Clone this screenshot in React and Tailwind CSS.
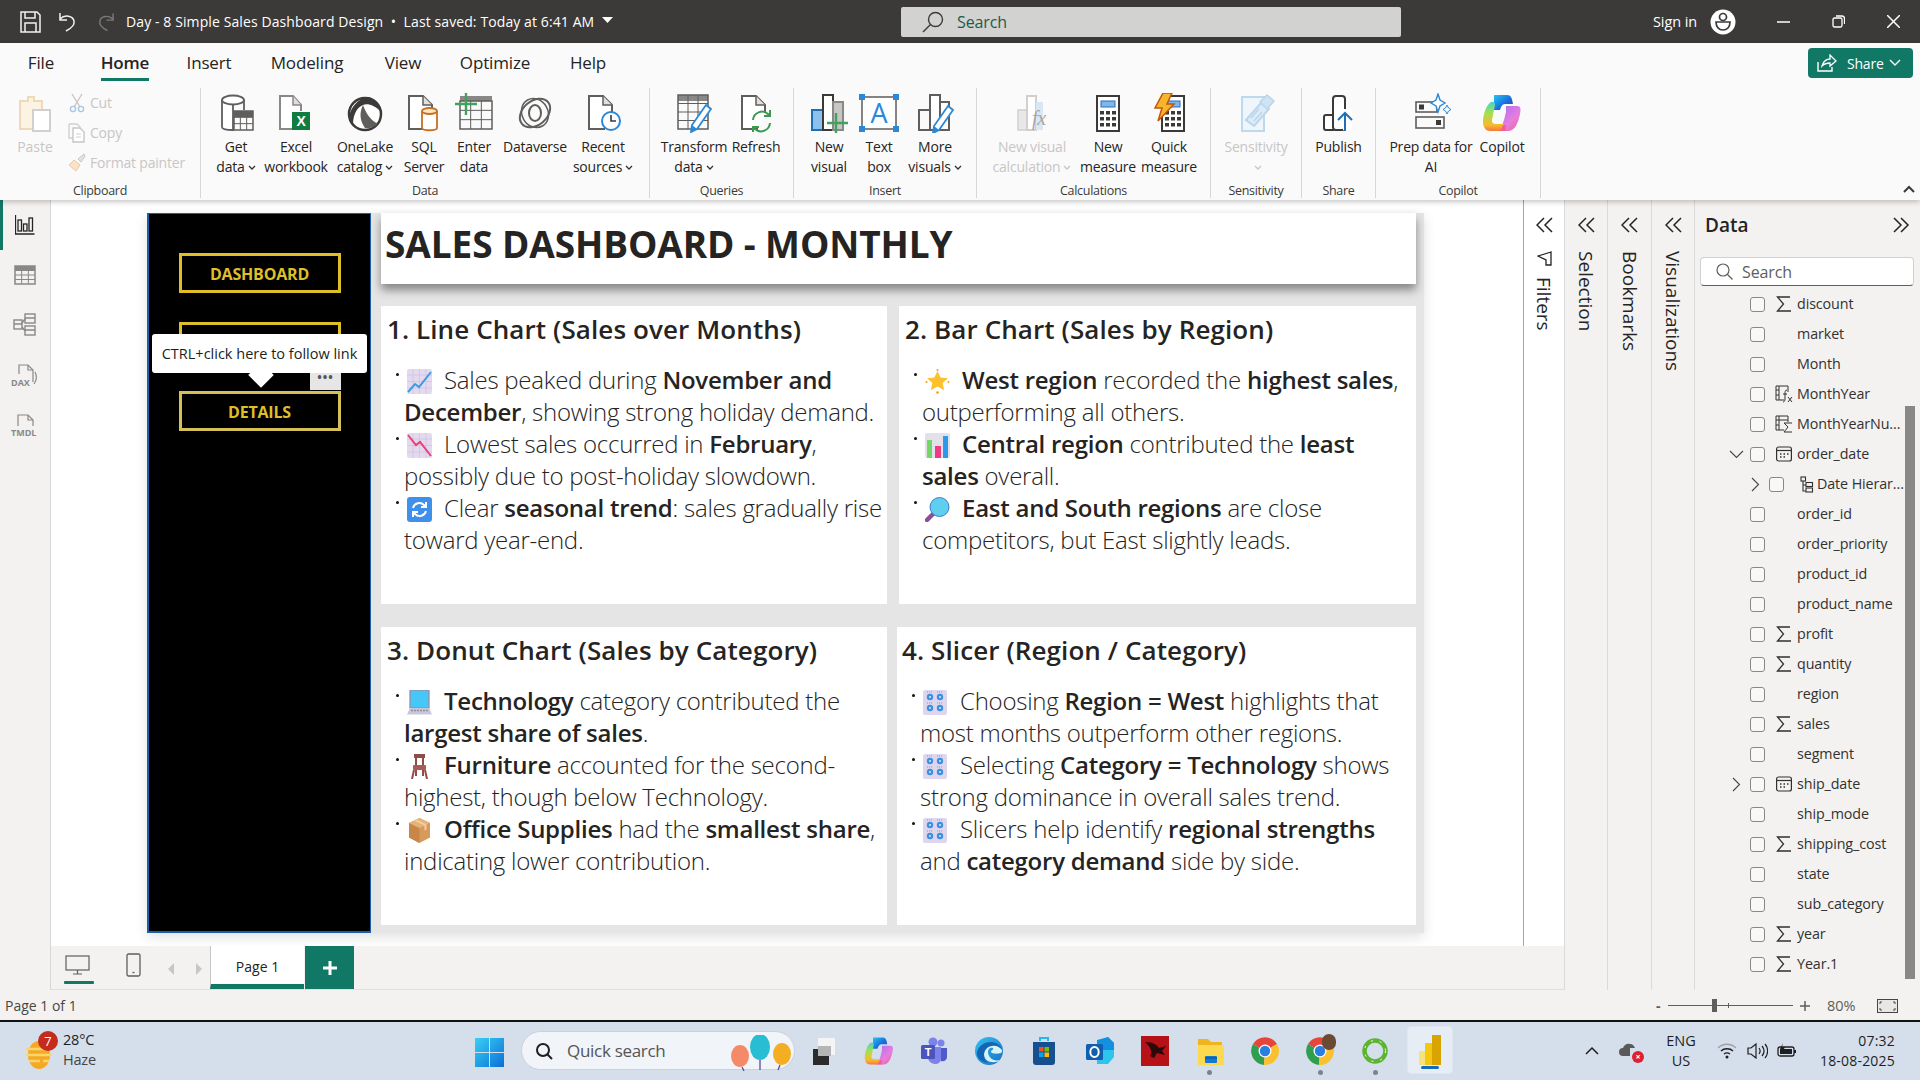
import React from "react";

const G = "#605e5c";
const Svg = ({ w = 40, h = 40, vb, children, className = "" }) => (
  <svg width={w} height={h} viewBox={vb || `0 0 ${w} ${h}`} fill="none" className={`shrink-0 ${className}`}>{children}</svg>
);
const Grid = ({ x, y, w, h, cols, rows, s = "#605e5c" }) => {
  const o = [];
  for (let i = 1; i < cols; i++) o.push(<path key={"c" + i} d={`M${x + (w * i) / cols} ${y}v${h}`} stroke={s} strokeWidth="1" />);
  for (let i = 1; i < rows; i++) o.push(<path key={"r" + i} d={`M${x} ${y + (h * i) / rows}h${w}`} stroke={s} strokeWidth="1" />);
  return <g>{o}<rect x={x} y={y} width={w} height={h} fill="none" stroke={s} strokeWidth="1.5" /></g>;
};
const Doc = ({ s = "#605e5c", x = 7 }) => (
  <g stroke={s} strokeWidth="2"><path d={`M${x + 16} 36H${x}V3h14l9 9v8`} fill="#fff" /><path d={`M${x + 14} 3v9h9`} fill="#e1dfdd" strokeWidth="1.5" /></g>
);

const IPaste = () => <Svg w={36} h={40}><path d="M3 8h8V4h6v4h8v28H3z" fill="#fdf3e3" stroke="#eed9b8" strokeWidth="2" /><rect x="16" y="17" width="17" height="21" fill="#fff" stroke="#d2d0ce" strokeWidth="2" /></Svg>;
const IGet = () => <Svg><path d="M6 7v27c0 2 5 3 11 3V7" fill="#fff" stroke={G} strokeWidth="1.8" /><path d="M28 7v10" stroke={G} strokeWidth="1.8" /><ellipse cx="17" cy="7" rx="11" ry="4.5" fill="#fff" stroke={G} strokeWidth="1.8" /><rect x="18" y="18" width="19" height="6" fill={G} /><Grid x={18} y={18} w={19} h={19} cols={3} rows={3} /></Svg>;
const IExcel = () => <Svg><path d="M25 18V12l-8-9H4v33h12" fill="#fff" stroke="#8a8886" strokeWidth="2" /><path d="M17 3v9h8" stroke="#8a8886" strokeWidth="1.5" fill="#e1dfdd" /><rect x="16" y="19" width="18" height="18" fill="#107c41" /><text x="25" y="33" fontSize="14" fontWeight="700" fill="#fff" textAnchor="middle" fontFamily="Liberation Sans">X</text></Svg>;
const IOne = () => <Svg><circle cx="20" cy="21" r="16" fill="#fff" stroke="#3b3a39" strokeWidth="2.5" /><path d="M5 20C9 8 20 3 24 4c8 3 12 11 12 15-6-7-14-9-18-7-5 2-10 8-10 20-3-4-3-8-3-12z" fill="#3b3a39" /><path d="M18 12c3 8 7 15 15 19-4 3-9 5-13 4-5-7-6-15-2-23z" fill="#605e5c" /><path d="M20 14c4 6 8 11 13 14" stroke="#fff" strokeWidth="1.500" /></Svg>;
const ISql = () => <Svg><Doc x={5} /><path d="M18 18v17c0 3 15 3 15 0V18" fill="#fff" stroke="#ca6f1e" strokeWidth="1.8" /><ellipse cx="25.5" cy="18" rx="7.5" ry="3" fill="#fde7c9" stroke="#ca6f1e" strokeWidth="1.8" /></Svg>;
const IEnter = () => <Svg><rect x="6" y="3" width="32" height="5" fill="#8a8886" /><Grid x={6} y={8} w={32} h={28} cols={3} rows={3} /><path d="M12 0v22M1 11h22" stroke="#3fa35b" strokeWidth="2.4" /></Svg>;
const IVerse = () => <Svg><ellipse cx="20" cy="20" rx="17" ry="12" transform="rotate(-40 20 20)" stroke={G} strokeWidth="2" /><ellipse cx="20" cy="20" rx="13" ry="15" transform="rotate(-30 20 20)" stroke={G} strokeWidth="1.5" /><ellipse cx="20" cy="20" rx="6" ry="8" stroke={G} strokeWidth="2" /></Svg>;
const IRecent = () => <Svg><Doc x={6} /><circle cx="28" cy="28" r="9" fill="#fff" stroke="#2b88d8" strokeWidth="2" /><path d="M28 22v6h5" stroke="#3b3a39" strokeWidth="1.6" /></Svg>;
const Pencil = ({ x = 0, y = 0 }) => <g transform={`translate(${x} ${y})`}><path d="M16 2l5 4L7 26l-6 3 1-7z" fill="#fff" stroke="#2b88d8" strokeWidth="1.8" /><path d="M1 29l1-7 5 4z" fill="#2b88d8" /></g>;
const ITrans = () => <Svg><rect x="4" y="2" width="30" height="6" fill="#8a8886" /><Grid x={4} y={2} w={30} h={34} cols={3} rows={4} /><Pencil x={16} y={10} /></Svg>;
const IRefresh = () => <Svg><Doc x={6} /><path d="M17 27a9 9 0 0 1 15-6l2 2m0-6v6h-6M34 30a9 9 0 0 1-15 6l-2-2m0 5v-5h6" stroke="#3a9a4f" strokeWidth="2" fill="none" /></Svg>;
const INewV = () => <Svg><rect x="3" y="17" width="11" height="20" fill="#8cc1ee" stroke="#1f6fb5" strokeWidth="2" /><rect x="14" y="2" width="10" height="35" fill="#fff" stroke="#3b3a39" strokeWidth="2" /><rect x="24" y="9" width="10" height="28" fill="#c8c6c4" stroke="#8a8886" strokeWidth="2" /><path d="M27 20v20M18 30h21" stroke="#3fa35b" strokeWidth="2.4" /></Svg>;
const IText = () => <Svg><rect x="3" y="4" width="34" height="32" stroke="#605e5c" strokeWidth="1.5" fill="#fff" /><text x="20" y="30" fontSize="27" fill="#2b88d8" textAnchor="middle" fontFamily="Open Sans">A</text>{[[0, 1], [34, 1], [0, 33], [34, 33]].map(([x, y]) => <rect key={x + "-" + y} x={x} y={y} width="6" height="6" fill="#2b88d8" />)}</Svg>;
const IMore = () => <Svg><rect x="4" y="17" width="11" height="20" stroke={G} strokeWidth="2" /><rect x="15" y="2" width="10" height="35" fill="#fff" stroke={G} strokeWidth="2" /><rect x="25" y="9" width="9" height="28" stroke={G} strokeWidth="2" fill="#fff" /><Pencil x={17} y={11} /></Svg>;
const ICalc = () => <Svg><rect x="6" y="17" width="9" height="20" fill="#e8e8e8" stroke="#d2d0ce" strokeWidth="1.5" /><rect x="15" y="3" width="9" height="34" fill="#fff" stroke="#d2d0ce" strokeWidth="2" /><rect x="24" y="9" width="7" height="28" fill="#d9e6f4" /><text x="20" y="32" fontSize="20" fontStyle="italic" fill="#a8a6a4" fontFamily="Liberation Serif">fx</text></Svg>;
const Calc = ({ x = 9 }) => <g><rect x={x} y="3" width="22" height="35" fill="#fff" stroke="#3b3a39" strokeWidth="2" /><rect x={x + 4} y="8" width="14" height="6" fill="#7db7ec" stroke="#2b6fb5" />{[18, 24, 30].map((y) => [4, 10, 16].map((d) => <rect key={y + "-" + d} x={x + d - 1} y={y} width="4" height="3.5" fill="#3b3a39" />))}</g>;
const IMeasure = () => <Svg><Calc /></Svg>;
const IQuick = () => <Svg><Calc x={13} /><path d="M14 0h9l-5 11h7L9 28l4-13H6z" fill="#f7b52c" stroke="#c4560c" strokeWidth="1.5" /></Svg>;
const ISens = () => <Svg><path d="M6 4h22v34H6z" fill="#eef6fc" stroke="#bcd9ee" strokeWidth="2" /><path d="M10 27l15-17 8 6-15 17z" fill="#dcebf7" stroke="#b9d6ec" strokeWidth="2" /><path d="M24 9l7-7 7 6-7 8z" fill="#cfe3f3" stroke="#b9d6ec" strokeWidth="1.5" /><path d="M15 25l8-9M18 28l8-9" stroke="#b9d6ec" strokeWidth="1.5" /></Svg>;
const IPub = () => <Svg><rect x="5" y="22" width="11" height="15" rx="2" stroke="#3b3a39" strokeWidth="2" fill="#fff" /><rect x="14" y="3" width="12" height="34" rx="3" stroke="#3b3a39" strokeWidth="2" fill="#fff" /><rect x="24" y="16" width="9" height="21" fill="#fff" /><path d="M26 38V21M19 27l7-7 7 7" stroke="#1f6fb5" strokeWidth="2" fill="none" /></Svg>;
const IPrep = () => <Svg><rect x="5" y="9" width="21" height="10" stroke="#605e5c" strokeWidth="1.6" /><rect x="8" y="11.5" width="5" height="5" fill="#3b3a39" /><rect x="5" y="24" width="28" height="11" stroke="#605e5c" strokeWidth="1.6" /><rect x="25" y="27" width="5" height="5" fill="#3b3a39" /><path d="M27 1l2 6 5 3-5 3-2 6-2-6-5-3 5-3z" fill="#fff" stroke="#2b88d8" strokeWidth="1.4" /><path d="M36 12l1.500 3 2.500 1.500-2.500 1.500-1.500 3-1.500-3L32 16.500l2.500-1.500z" stroke="#2b88d8" fill="#fff" /></Svg>;
const ICop = ({ s = 40 }) => (
  <Svg w={s} h={s} vb="0 0 40 40">
    <defs>
      <linearGradient id="cp1" x1="0" y1="0" x2="1" y2="1"><stop offset="0" stopColor="#22c7ee" /><stop offset=".55" stopColor="#1a6ee0" /><stop offset="1" stopColor="#2d3fb0" /></linearGradient>
      <linearGradient id="cp2" x1="0" y1="0" x2="0" y2="1"><stop offset="0" stopColor="#45d6c6" /><stop offset=".4" stopColor="#a6e04f" /><stop offset=".8" stopColor="#f9b92c" /><stop offset="1" stopColor="#f5793c" /></linearGradient>
      <linearGradient id="cp3" x1="0" y1="0" x2="1" y2="1"><stop offset="0" stopColor="#a06ef0" /><stop offset=".6" stopColor="#e67de0" /><stop offset="1" stopColor="#f0608f" /></linearGradient>
    </defs>
    <path d="M12 2h13c4 0 5 3 6 9l-8 0c-3 0-4 3-5 6l-6 0z" fill="url(#cp1)" />
    <path d="M24 13h11c4 0 4 3 3 8-2 9-5 17-12 17H14c5-2 6-5 8-11l2-8z" fill="url(#cp3)" />
    <path d="M9 9c-5 3-8 13-8 20 0 4 2 9 7 9h9c3-1 4-3 5-7h-8c-3 0-4-1-4-4l3-15c.5-2-2-4-4-3z" fill="url(#cp2)" />
    <path d="M17 38h8c-1 0-2-2-1-6l-3 0c-1 3-2 5-4 6z" fill="#f0608f" />
  </Svg>
);

const Chev = ({ c = "#323130" }) => <svg width="8" height="6" viewBox="0 0 8 6" className="inline-block ml-[3px] align-[1px]"><path d="M1 1l3 3 3-3" stroke={c} strokeWidth="1.3" fill="none" /></svg>;

const RB = ({ w, icon, l1, l2, chev, off }) => (
  <div className={`flex flex-col items-center pt-[5px] text-[14px] leading-[20px] tracking-[-0.2px] whitespace-nowrap ${off ? "text-[#c8c6c4]" : "text-[#252423]"}`} style={{ width: w }}>
    <div className="h-[40px] flex items-center justify-center mb-[4px]">{icon}</div>
    <div>{l1}</div>
    <div className="h-[20px]">{l2}{chev && <Chev c={off ? "#c8c6c4" : "#323130"} />}</div>
  </div>
);
const Group = ({ w, label, children }) => (
  <div className="flex flex-col h-[110px] border-r border-[#d9d7d5] shrink-0" style={{ width: w }}>
    <div className="flex h-[96px]">{children}</div>
    <div className="text-center text-[12.500px] leading-[14px] tracking-[-0.3px] text-[#3b3a39]">{label}</div>
  </div>
);

const Ribbon = () => (
  <div className="relative z-10 h-[157px] bg-[#fafafa] shadow-[0_2px_5px_rgba(0,0,0,0.22)] shrink-0">
    <div className="flex h-[42px] items-start">
      {[["File", 82], ["Home", 86], ["Insert", 82], ["Modeling", 114], ["View", 78], ["Optimize", 106], ["Help", 80]].map(([t, w]) => (
        <div key={t} className="flex justify-center pt-[7px] text-[17px] tracking-[-0.15px] text-[#252423]" style={{ width: w }}>
          <span className={t === "Home" ? "h-[31px] border-b-[3px] border-[#117865] font-semibold" : "h-[31px]"}>{t}</span>
        </div>
      ))}
      <div className="ml-auto mr-[7px] mt-[5px] w-[105px] h-[30px] rounded-[4px] bg-[#117865] text-white flex items-center pl-[9px] gap-[10px] text-[14px] tracking-[-0.2px]">
        <svg width="20" height="18" viewBox="0 0 20 18" fill="none"><path d="M1 8v9h14v-4" stroke="#fff" strokeWidth="1.4" /><path d="M5 12c1-5 5-7 8-7V1l6 6-6 5V9c-3 0-6 1-8 3z" stroke="#fff" strokeWidth="1.3" /></svg>
        <span className="flex items-center gap-[5px]">Share<svg width="12" height="8" viewBox="0 0 12 8"><path d="M1 1l5 5 5-5" stroke="#fff" strokeWidth="1.4" fill="none" /></svg></span>
      </div>
    </div>
    <div className="flex h-[115px] pt-[3px]">
      <Group w={201} label="Clipboard">
        <div className="flex flex-col items-center w-[70px] pt-[5px] text-[14px] leading-[20px] text-[#c8c6c4]"><IPaste /><span className="mt-[4px]">Paste</span></div>
        <div className="flex flex-col -ml-[2px] pt-[3px] text-[14px] leading-[24px] gap-[6px] text-[#c8c6c4] tracking-[-0.2px] whitespace-nowrap">
          <div className="flex items-center gap-[4px] h-[24px]">
            <svg width="18" height="20" viewBox="0 0 18 20" fill="none"><path d="M4 1l8 13M14 1L6 14" stroke="#c8c6c4" strokeWidth="1.4" /><circle cx="5" cy="16" r="2.600" stroke="#a9c7e3" strokeWidth="1.400" /><circle cx="13" cy="16" r="2.600" stroke="#a9c7e3" strokeWidth="1.400" /></svg>Cut
          </div>
          <div className="flex items-center gap-[4px] h-[24px]">
            <svg width="18" height="20" viewBox="0 0 18 20" fill="none"><path d="M1 1h8l3 3v2M5 15H1V1" stroke="#d2d0ce" strokeWidth="1.400" /><path d="M5 5h7l4 4v10H5z" stroke="#c8c6c4" strokeWidth="1.400" fill="#fff" /><path d="M8 11h5M8 14h5" stroke="#d2d0ce" /></svg>Copy
          </div>
          <div className="flex items-center gap-[4px] h-[24px]">
            <svg width="18" height="20" viewBox="0 0 18 20" fill="none"><path d="M10 6L16 1l1 2-4 6z" fill="#e6e4e2" stroke="#c8c6c4" /><path d="M6 7l6 5-4 6-7-6z" fill="#fbe3c8" stroke="#eec9a0" /></svg>Format painter
          </div>
        </div>
      </Group>
      <Group w={449} label="Data">
        <div className="w-[5px]" />
        <RB w={60} icon={<IGet />} l1="Get" l2="data" chev />
        <RB w={60} icon={<IExcel />} l1="Excel" l2="workbook" />
        <RB w={78} icon={<IOne />} l1="OneLake" l2="catalog" chev />
        <RB w={40} icon={<ISql />} l1="SQL" l2="Server" />
        <RB w={60} icon={<IEnter />} l1="Enter" l2="data" />
        <RB w={62} icon={<IVerse />} l1="Dataverse" />
        <RB w={74} icon={<IRecent />} l1="Recent" l2="sources" chev />
      </Group>
      <Group w={144} label="Queries">
        <RB w={88} icon={<ITrans />} l1="Transform" l2="data" chev />
        <RB w={36} icon={<IRefresh />} l1="Refresh" />
      </Group>
      <Group w={183} label="Insert">
        <RB w={70} icon={<INewV />} l1="New" l2="visual" />
        <RB w={30} icon={<IText />} l1="Text" l2="box" />
        <RB w={82} icon={<IMore />} l1="More" l2="visuals" chev />
      </Group>
      <Group w={234} label="Calculations">
        <RB w={110} off icon={<ICalc />} l1="New visual" l2="calculation" chev />
        <RB w={42} icon={<IMeasure />} l1="New" l2="measure" />
        <RB w={80} icon={<IQuick />} l1="Quick" l2="measure" />
      </Group>
      <Group w={91} label="Sensitivity"><RB w={90} off icon={<ISens />} l1="Sensitivity" l2="" chev /></Group>
      <Group w={74} label="Share"><RB w={73} icon={<IPub />} l1="Publish" /></Group>
      <Group w={165} label="Copilot">
        <RB w={110} icon={<IPrep />} l1="Prep data for" l2="AI" />
        <RB w={32} icon={<ICop />} l1="Copilot" />
      </Group>
      <div className="ml-auto mr-[4px] mt-[96px]"><svg width="14" height="10" viewBox="0 0 14 10"><path d="M2 8l5-5 5 5" stroke="#3b3a39" strokeWidth="2" fill="none" /></svg></div>
    </div>
  </div>
);

const TitleBar = () => (
  <div className="flex h-[43px] bg-[#3b3a38] text-white shrink-0 items-center">
    <div className="w-[901px] flex items-center shrink-0">
      <div className="w-[20px]" />
      <svg width="21" height="22" viewBox="0 0 21 22" fill="none" stroke="#f3f2f1" strokeWidth="1.5"><path d="M1 1h16l3 3v17H1z" /><path d="M5 1v6h10V1M5 21v-9h11v9M8 15" /></svg>
      <svg className="ml-[18px]" width="18" height="22" viewBox="0 0 18 22" fill="none" stroke="#f3f2f1" strokeWidth="1.5"><path d="M1 2v7h7M1 8c5-5 13-3 14 2 1 5-4 8-8 10" /></svg>
      <svg className="ml-[20px]" width="17" height="22" viewBox="0 0 18 22" fill="none" stroke="#7b7a78" strokeWidth="1.5"><path d="M17 2v7h-7M17 8c-5-5-13-3-14 2-1 5 4 8 8 10" /></svg>
      <div className="ml-[12px] text-[14px] whitespace-nowrap tracking-[0.1px]">Day - 8 Simple Sales Dashboard Design&nbsp;&nbsp;•&nbsp; Last saved: Today at 6:41 AM</div>
      <svg className="ml-[8px] mb-[4px]" width="11" height="6" viewBox="0 0 11 6"><path d="M0 0h11L5.500 6z" fill="#fff" /></svg>
    </div>
    <div className="w-[500px] h-[30px] rounded-[2px] bg-[#d2d2d0] flex items-center pl-[21px] gap-[13px] shrink-0">
      <svg width="22" height="22" viewBox="0 0 22 22" fill="none" stroke="#3b3a39" strokeWidth="1.4"><circle cx="13.500" cy="8.500" r="7" /><path d="M8.500 13.500L1 21" /></svg>
      <span className="text-[16px] text-[#1c5a4e] tracking-[-0.1px]">Search</span>
    </div>
    <div className="flex items-center flex-1">
      <span className="ml-[252px] text-[14.500px] whitespace-nowrap tracking-[-0.1px]">Sign in</span>
      <svg className="ml-[13px]" width="26" height="26" viewBox="0 0 26 26" fill="none"><circle cx="13" cy="13" r="12.500" fill="#fff" /><circle cx="13" cy="8" r="3.500" stroke="#3b3a38" strokeWidth="1.700" /><path d="M6 13h14c0 5-3 8-7 8s-7-3-7-8z" stroke="#3b3a38" strokeWidth="1.700" /></svg>
      <svg className="ml-[41px]" width="13" height="2" viewBox="0 0 13 2"><path d="M0 1h13" stroke="#fff" strokeWidth="1.500" /></svg>
      <svg className="ml-[42px]" width="13" height="13" viewBox="0 0 13 13" fill="none" stroke="#fff" strokeWidth="1.300"><rect x="1" y="3" width="9" height="9" rx="1.500" /><path d="M4 1h6c2 0 2.500 1 2.500 2.500V9" /></svg>
      <svg className="ml-[42px]" width="13" height="13" viewBox="0 0 13 13" stroke="#fff" strokeWidth="1.500"><path d="M0 0l13 13M13 0L0 13" /></svg>
    </div>
  </div>
);

const RailSlot = ({ children }) => <div className="relative h-[50px] w-full flex items-center justify-center shrink-0">{children}</div>;
const Rail = () => (
  <div className="relative w-[51px] shrink-0 bg-[#f3f2f1] border-r border-[#d9d7d5] flex flex-col items-center">
    <div className="absolute left-0 top-0 w-[3px] h-[50px] bg-[#117865]" />
    <RailSlot><svg width="20" height="20" viewBox="0 0 20 20" fill="none" stroke="#252423" strokeWidth="1.300"><path d="M.5 0v19h19" /><rect x="3" y="5" width="3.500" height="11" /><rect x="8.500" y="9" width="3.500" height="7" /><rect x="14" y="3" width="3.500" height="13" /></svg></RailSlot>
    <RailSlot><svg width="22" height="20" viewBox="0 0 22 20"><rect x="1" y="1" width="20" height="4" fill="#8a8886" /><Grid x={1} y={1} w={20} h={18} cols={3} rows={4} s="#8a8886" /></svg></RailSlot>
    <RailSlot><svg width="24" height="24" viewBox="0 0 24 24" fill="none" stroke="#8a8886" strokeWidth="1.400"><rect x="1" y="7" width="8" height="9" /><rect x="12" y="1" width="10" height="9" /><rect x="12" y="13" width="10" height="9" /><path d="M1 11h8M12 5h10M12 17h10M9 10l3-4M9 14l3 4" /></svg></RailSlot>
    <RailSlot>
      <div className="relative h-[24px] w-[28px] mt-[2px]">
        <svg width="28" height="24" viewBox="0 0 28 24" fill="none" stroke="#8a8886" strokeWidth="1.200"><path d="M8 10V1h9l5 5v12" /><path d="M17 1v5h5M24 8c2 4 2 8-1 12" /></svg>
        <span className="absolute left-0 bottom-0 text-[9px] leading-[10px] font-bold text-[#8a8886]">DAX</span>
      </div>
    </RailSlot>
    <RailSlot>
      <div className="relative h-[24px] w-[28px] mt-[2px]">
        <svg width="28" height="24" viewBox="0 0 28 24" fill="none" stroke="#8a8886" strokeWidth="1.200"><path d="M7 12V1h10l5 5v6" /><path d="M17 1v5h5" /></svg>
        <span className="absolute left-0 bottom-0 text-[9px] leading-[10px] font-bold text-[#8a8886]">TMDL</span>
      </div>
    </RailSlot>
  </div>
);

/* ---- emoji drawings ---- */
const Em = ({ children }) => (
  <svg width="25" height="25" viewBox="0 0 25 25" className="inline-block mr-[12px] align-[-5px]">{children}</svg>
);
const GridBg = () => <g><rect width="25" height="25" rx="2" fill="#e4daf0" /><path d="M6 0v25M12.500 0v25M19 0v25M0 6h25M0 12.500h25M0 19h25" stroke="#cfc3de" strokeWidth=".8" /></g>;
const EUp = () => <Em><GridBg /><path d="M1 23l7-8 4 3L24 3" stroke="#3c9be0" strokeWidth="2" fill="none" /></Em>;
const EDown = () => <Em><GridBg /><path d="M1 2l8 10 4-3 11 14" stroke="#ea3e78" strokeWidth="2" fill="none" /></Em>;
const ELoop = () => <Em><rect width="25" height="25" rx="3" fill="#3f90ea" /><path d="M6 11a6.500 6.500 0 0 1 11-3l2 2m0-5v5h-5M19 14a6.500 6.500 0 0 1-11 3l-2-2m0 5v-5h5" stroke="#fff" strokeWidth="2" fill="none" /></Em>;
const EStar = () => <Em><path d="M12.500 2l3.200 6.500 7.300.8-5.400 4.800 1.600 7.200-6.700-3.700-6.700 3.700 1.600-7.200L2 9.300l7.300-.8z" fill="#fdc12e" /><circle cx="12.500" cy="1" r="1" fill="#f79a1c" /><circle cx="1.500" cy="13" r="1" fill="#f79a1c" /><circle cx="23.500" cy="13" r="1" fill="#f79a1c" /><circle cx="12.500" cy="23.500" r="1.300" fill="#f79a1c" /></Em>;
const EBars = () => <Em><rect width="25" height="25" rx="2" fill="#e3e0ea" /><rect x="2" y="7" width="5" height="18" fill="#72d865" /><rect x="10" y="13" width="6" height="12" fill="#ee3c84" /><rect x="18" y="3" width="5" height="22" fill="#2c9ae8" /></Em>;
const EMag = () => <Em><path d="M9 16l-7 7" stroke="#8a4e9c" strokeWidth="4.500" strokeLinecap="round" /><circle cx="14.500" cy="10" r="9.500" fill="#5ecfee" stroke="#3f7ccd" strokeWidth="1" /></Em>;
const ELap = () => <Em><rect x="3" y="0" width="19" height="18" fill="#3da8f2" stroke="#9c9ab0" strokeWidth="1.400" /><rect x="4" y="1" width="17" height="16" fill="#45c8f7" /><path d="M3 18h19l3 6.500H0z" fill="#c9c6d8" /><path d="M4 20.500h17" stroke="#8f8da3" strokeWidth="1.500" strokeDasharray="2 1" /></Em>;
const EChair = () => <Em><rect x="7" y="0" width="11" height="4" fill="#8f4c48" /><rect x="8" y="4" width="2" height="8" fill="#8f4c48" /><rect x="15" y="4" width="2" height="8" fill="#8f4c48" /><rect x="6" y="11" width="13" height="5" rx="1" fill="#a85c55" /><path d="M7 16l-2 9M18 16l2 9M9 16v6M16 16v6" stroke="#8f4c48" strokeWidth="2" /></Em>;
const EBox = () => <Em><path d="M12.500 0l10.500 5v14.500L12.500 25 2 19.500V5z" fill="#d89a5b" /><path d="M12.500 25V10L2 5v14.500z" fill="#c98649" /><path d="M12.500 10L23 5 12.500 0 2 5z" fill="#e6b27a" /><path d="M7 2.500l10.500 5v5l2-1V6.500L9 1z" fill="#f1cfa3" /></Em>;
const EKnob = () => <Em><rect width="24" height="25" rx="2" fill="#ddd6ee" />{[[7, 7], [17, 7], [7, 18], [17, 18]].map(([x, y]) => <g key={x + "-" + y}><circle cx={x} cy={y} r="3.200" fill="#3d8fdf" /><circle cx={x} cy={y} r="1" fill="#d4ecfb" /><path d={`M${x - 3} ${y - 5}h6`} stroke="#9a97ad" strokeDasharray="1 1" /></g>)}</Em>;

const Dot = () => <span className="inline-block w-[3px] h-[3px] rounded-full bg-[#111] -ml-[8px] mr-[8px] align-[13px]" />;
const B = ({ children }) => <b className="font-semibold text-[#252423]">{children}</b>;
const Li = ({ em, children }) => (
  <div className="whitespace-nowrap"><Dot />{em}{children}</div>
);
const Card = ({ w, pl, title, children }) => (
  <div className="bg-white h-[298px] shrink-0 pt-[7px]" style={{ width: w, paddingLeft: pl }}>
    <div className="text-[26px] leading-[32px] font-semibold text-[#252423] tracking-[0.1px] whitespace-nowrap">{title}</div>
    <div className="mt-[19px] text-[24px] leading-[32px] font-light text-[#252423] tracking-[-0.25px]" style={{ marginLeft: 23 - pl }}>{children}</div>
  </div>
);

const NavBtn = ({ children, sel }) => (
  <div className={`w-[162px] h-[40px] shrink-0 flex items-center justify-center border-[3px] pt-[2px] text-[16px] font-bold tracking-[-0.2px] text-[#dfbf26] ${sel ? "border-[#d5c058]" : "border-[#dfbf26]"}`}>{children}</div>
);

const Report = () => (
  <div className="flex w-[1277px] h-[720px] shadow-[0_4px_12px_rgba(0,0,0,0.12)]">
    <div className="relative w-[224px] shrink-0 bg-black border border-[#1a5fa8] border-l-2 border-b-2 flex flex-col items-center pt-[39px] gap-[29px]">
      <NavBtn>DASHBOARD</NavBtn>
      <NavBtn />
      <NavBtn sel>DETAILS</NavBtn>
      <div className="absolute left-[161px] top-[159px] w-[31px] h-[17px] bg-[#e6e6e6] flex justify-center text-[#555] text-[12px] leading-[10px] font-bold tracking-[1px]">•••</div>
      <div className="absolute left-[103px] top-[152px] w-[18px] h-[18px] rotate-45 bg-white" />
      <div className="absolute left-[3px] top-[120px] w-[215px] h-[39px] rounded-[3px] bg-white flex items-center justify-center text-[14.500px] text-[#201f1e] whitespace-nowrap">CTRL+click here to follow link</div>
    </div>
    <div className="flex-1 bg-[#e5e5e5] pl-[10px]">
      <div className="w-[1035px] h-[71px] bg-white shadow-[0_6px_9px_rgba(0,0,0,0.42)] pl-[4px] pt-[6px] text-[37px] leading-[50px] font-bold text-[#252423] tracking-[-0.1px] whitespace-nowrap">SALES DASHBOARD - MONTHLY</div>
      <div className="flex mt-[22px] gap-[12px]">
        <Card w={506} pl={6} title="1. Line Chart (Sales over Months)">
          <Li em={<EUp />}>Sales peaked during <B>November and<br />December</B>, showing strong holiday demand.</Li>
          <Li em={<EDown />}>Lowest sales occurred in <B>February</B>,<br />possibly due to post-holiday slowdown.</Li>
          <Li em={<ELoop />}>Clear <B>seasonal trend</B>: sales gradually rise<br />toward year-end.</Li>
        </Card>
        <Card w={517} pl={6} title="2. Bar Chart (Sales by Region)">
          <Li em={<EStar />}><B>West region</B> recorded the <B>highest sales</B>,<br />outperforming all others.</Li>
          <Li em={<EBars />}><B>Central region</B> contributed the <B>least<br />sales</B> overall.</Li>
          <Li em={<EMag />}><B>East and South regions</B> are close<br />competitors, but East slightly leads.</Li>
        </Card>
      </div>
      <div className="flex mt-[23px] gap-[10px]">
        <Card w={506} pl={6} title="3. Donut Chart (Sales by Category)">
          <Li em={<ELap />}><B>Technology</B> category contributed the<br /><B>largest share of sales</B>.</Li>
          <Li em={<EChair />}><B>Furniture</B> accounted for the second-<br />highest, though below Technology.</Li>
          <Li em={<EBox />}><B>Office Supplies</B> had the <B>smallest share</B>,<br />indicating lower contribution.</Li>
        </Card>
        <Card w={519} pl={5} title="4. Slicer (Region / Category)">
          <Li em={<EKnob />}>Choosing <B>Region = West</B> highlights that<br />most months outperform other regions.</Li>
          <Li em={<EKnob />}>Selecting <B>Category = Technology</B> shows<br />strong dominance in overall sales trend.</Li>
          <Li em={<EKnob />}>Slicers help identify <B>regional strengths</B><br />and <B>category demand</B> side by side.</Li>
        </Card>
      </div>
    </div>
  </div>
);

const DblChev = ({ right }) => (
  <svg width="17" height="16" viewBox="0 0 17 16" fill="none" stroke="#252423" strokeWidth="1.500">
    {right ? <path d="M1 1l7 7-7 7M8 1l7 7-7 7" /> : <path d="M8 1L1 8l7 7M16 1L9 8l7 7" />}
  </svg>
);

const Pane = ({ w, label, filter }) => (
  <div className={`shrink-0 flex flex-col items-center pt-[17px] ${filter ? "" : "border-l border-[#dcdad8] bg-[#f3f2f1]"}`} style={{ width: w }}>
    <DblChev />
    {filter && <svg className="mt-[18px]" width="15" height="15" viewBox="0 0 15 15" fill="none" stroke="#252423" strokeWidth="1.300"><path d="M14 1L1 5l8 4v5h5z" /></svg>}
    <div className={`[writing-mode:vertical-rl] text-[19px] font-medium text-[#252423] whitespace-nowrap ${filter ? "mt-[11px]" : "mt-[18px]"}`}>{label}</div>
  </div>
);

const Sum = () => <svg width="16" height="16" viewBox="0 0 16 16" fill="none" stroke="#323130" strokeWidth="1.300"><path d="M14 1H1.500l6 7-6 7H15" /></svg>;
const Cal = () => <svg width="16" height="16" viewBox="0 0 16 16" fill="none" stroke="#323130" strokeWidth="1.200"><rect x=".6" y="1" width="14.800" height="14" rx="2" /><path d="M1 4.500h14" /><path d="M4 8h1.500M7.500 8H9M11 8h1.500M4 11h1.500M7.500 11H9" strokeWidth="1.300" /></svg>;
const Fx = () => <svg width="18" height="18" viewBox="0 0 18 18" fill="none" stroke="#323130" strokeWidth="1"><path d="M9 15H1V1h12v6M4 1v14M1 5h3M1 10h3" /><path d="M12 5c-2 0-2 2-2 4v5c0 2-1 3-2 3M8 9h4" /><path d="M13 12l4 5M17 12l-4 5" /></svg>;
const MeasI = () => <svg width="18" height="18" viewBox="0 0 18 18" fill="none" stroke="#323130" strokeWidth="1"><path d="M9 15H1V1h12v6M4 1v14M1 5h12M1 10h3" /><path d="M17 8H9l4 4-4 5h8" /></svg>;
const Hier = () => <svg width="14" height="17" viewBox="0 0 14 17" fill="none" stroke="#323130" strokeWidth="1.100"><rect x="1" y="1" width="4.500" height="4" /><path d="M3 5v10h3M3 9h3" /><rect x="6" y="6.500" width="6.500" height="4" /><rect x="6" y="12" width="6.500" height="4" /></svg>;

const rows = [
  ["discount", <Sum />], ["market"], ["Month"], ["MonthYear", <Fx />], ["MonthYearNu...", <MeasI />],
  ["order_date", <Cal />, "open"], ["Date Hierar...", <Hier />, "child"], ["order_id"], ["order_priority"], ["product_id"], ["product_name"],
  ["profit", <Sum />], ["quantity", <Sum />], ["region"], ["sales", <Sum />], ["segment"], ["ship_date", <Cal />, "closed"], ["ship_mode"],
  ["shipping_cost", <Sum />], ["state"], ["sub_category"], ["year", <Sum />], ["Year.1", <Sum />],
];

const Row = ({ t, icon, st }) => {
  const child = st === "child";
  return (
    <div className="h-[30px] flex items-center text-[14.300px] text-[#323130] tracking-[-0.1px] whitespace-nowrap">
      <div className={`flex justify-center shrink-0 ${child ? "w-[74px] pl-[46px]" : "w-[55px] pl-[27px]"}`}>
        {st === "open" && <svg width="15" height="9" viewBox="0 0 15 9" fill="none" stroke="#484644" strokeWidth="1.100"><path d="M1 1l6.500 6.500L14 1" /></svg>}
        {(st === "closed" || child) && <svg width="9" height="15" viewBox="0 0 9 15" fill="none" stroke="#484644" strokeWidth="1.100"><path d="M1 1l6.500 6.500L1 14" /></svg>}
      </div>
      <div className="w-[15px] h-[15px] shrink-0 rounded-[3px] border border-[#8a8886] bg-[#f8f8f7]" />
      <div className={`w-[18px] flex justify-center shrink-0 ${child ? "ml-[14px]" : "ml-[10px]"}`}>{icon}</div>
      <span className={child ? "ml-[1px]" : "ml-[4px]"}>{t}</span>
    </div>
  );
};

const DataPane = () => (
  <div className="w-[226px] shrink-0 border-l border-[#dcdad8] bg-[#f3f2f1] flex flex-col">
    <div className="flex items-center justify-between h-[50px] pl-[10px] pr-[10px]">
      <span className="text-[19px] font-semibold text-[#252423]">Data</span>
      <DblChev right />
    </div>
    <div className="ml-[5px] mr-[6px] mt-[7px] h-[29px] rounded-[4px] border border-[#d1d1d1] border-b-[#616161] bg-white flex items-center pl-[15px] gap-[9px] shrink-0">
      <svg width="17" height="17" viewBox="0 0 17 17" fill="none" stroke="#605e5c" strokeWidth="1.200"><circle cx="7" cy="7" r="6" /><path d="M11.500 11.500l5 5" /></svg>
      <span className="text-[16px] text-[#605e5c] tracking-[-0.1px] pt-[1px]">Search</span>
    </div>
    <div className="flex flex-1 mt-[10px] overflow-hidden">
      <div className="flex-1 -mt-[7px]">{rows.map((r) => <Row key={r[0]} t={r[0]} icon={r[1]} st={r[2]} />)}</div>
      <div className="w-[10px] mr-[5px] shrink-0 pt-[110px]"><div className="h-[573px] bg-[#8a8886]" /></div>
    </div>
  </div>
);

const TabBar = () => (
  <div className="h-[44px] flex bg-[#f3f2f1] shrink-0 border-b border-[#e1dfdd]">
    <div className="flex flex-col items-center w-[30px] ml-[13px] pt-[9px] shrink-0">
      <svg className="mr-[4px]" width="25" height="20" viewBox="0 0 25 20" fill="none" stroke="#605e5c" strokeWidth="1.200"><rect x="1" y="1" width="23" height="14" /><path d="M12.500 15v4M8 19h9" /></svg>
      <div className="w-[30px] h-[3px] mt-[6px] bg-[#117865] rounded-[1px]" />
    </div>
    <div className="ml-[32px] pt-[7px] shrink-0"><svg width="15" height="24" viewBox="0 0 15 24" fill="none" stroke="#605e5c" strokeWidth="1.300"><rect x="1" y="1" width="13" height="22" rx="1.500" /><path d="M6.500 19.500h2" /></svg></div>
    <div className="ml-[27px] pt-[17px] flex gap-[22px] shrink-0">
      <svg width="6" height="12" viewBox="0 0 6 12"><path d="M6 0v12L0 6z" fill="#c8c6c4" /></svg>
      <svg width="6" height="12" viewBox="0 0 6 12"><path d="M0 0v12l6-6z" fill="#c8c6c4" /></svg>
    </div>
    <div className="ml-[8px] w-[94px] bg-white border-b-[5px] border-l border-[#117865] border-l-[#c8c6c4] flex items-center justify-center text-[14px] text-[#252423] pt-[2px] shrink-0">Page 1</div>
    <div className="ml-[1px] w-[49px] bg-[#117865] flex items-center justify-center shrink-0"><svg width="14" height="14" viewBox="0 0 14 14"><path d="M7 0v14M0 7h14" stroke="#fff" strokeWidth="3" /></svg></div>
  </div>
);

const StatusBar = () => (
  <div className="h-[30px] shrink-0 bg-[#f3f2f1] flex items-center text-[14px] text-[#484644] pt-[1px]">
    <span className="ml-[5px]">Page 1 of 1</span>
    <div className="ml-auto flex items-center">
      <span className="font-bold text-[#605e5c] w-[12px]">-</span>
      <div className="relative w-[125px] h-[1px] bg-[#605e5c]">
        <div className="absolute left-[44px] -top-[6px] w-[5px] h-[13px] bg-[#605e5c]" />
        <div className="absolute left-[60px] -top-[2px] w-[1px] h-[5px] bg-[#605e5c]" />
      </div>
      <svg className="ml-[7px]" width="10" height="10" viewBox="0 0 10 10"><path d="M5 0v10M0 5h10" stroke="#605e5c" strokeWidth="1.500" /></svg>
      <span className="ml-[17px] w-[34px] text-[14.500px] text-[#605e5c]">80%</span>
      <svg className="ml-[16px] mr-[22px]" width="21" height="14" viewBox="0 0 21 14" fill="none" stroke="#484644"><rect x=".5" y=".5" width="20" height="13" fill="#e8e7e5" /><path d="M5 3H3v2M16 3h2v2M5 11H3V9M16 11h2V9" fill="none" /></svg>
    </div>
  </div>
);

function Chrome() {
  return (
    <Svg w={30} h={30}>
      <path d="M15 15L3 8a14 14 0 0 1 24 0z" fill="#e8453a" />
      <path d="M15 15L3 8a14 14 0 0 0 11 21z" fill="#2f9e4f" />
      <path d="M15 15l12-7a14 14 0 0 1-13 21z" fill="#fbc02d" />
      <circle cx="15" cy="15" r="6.500" fill="#fff" /><circle cx="15" cy="15" r="5.200" fill="#2a7de1" />
    </Svg>
  );
}
const TaskIcons = [
  <Svg w={26} h={28}><rect x="2" y="12" width="16" height="16" fill="#2b2b2b" /><rect x="7" y="1" width="17" height="17" rx="1" fill="#f4f4f4" /><rect x="7" y="9" width="13" height="10" fill="#b5b5b5" /></Svg>,
  <ICop s={30} />,
  <Svg w={28} h={28}><circle cx="21" cy="6" r="3.500" fill="#7b83eb" /><circle cx="13" cy="5" r="4.500" fill="#7b83eb" /><path d="M17 11h10v9c0 3-3 5-6 4z" fill="#5059c9" /><path d="M8 10h13v12c0 3-3 5-6 5s-7-3-7-6z" fill="#7b83eb" /><rect x="1" y="8" width="14" height="14" rx="1.500" fill="#4b53bc" /><text x="8" y="19" fontSize="11" fontWeight="700" fill="#fff" textAnchor="middle" fontFamily="Liberation Sans">T</text></Svg>,
  <Svg w={30} h={30}><defs><linearGradient id="edg" x1="0" y1="0" x2="1" y2="1"><stop offset="0" stopColor="#35c1f1" /><stop offset="1" stopColor="#1b6fc4" /></linearGradient></defs><circle cx="15" cy="15" r="14" fill="url(#edg)" /><path d="M10 18c0-6 4-9 9-9 4 0 7 2 9 5 0 1 0 2-1 3-3 1-9 1-10-1 0-2 3-2 2-4-2-1-5 0-5 4 0 5 5 10 12 8-4 4-16 3-16-6z" fill="#d7f2f3" /><path d="M17 6c5 0 10 3 11 8-2-3-6-5-10-4-4 0-8 4-8 9 0 4 2 7 5 8-8 0-13-6-12-11 2-7 8-10 14-10z" fill="#1565b5" /></Svg>,
  <Svg w={26} h={30}><path d="M9 5V2h8v3" stroke="#2bb5ee" strokeWidth="2" /><path d="M2 6h22v20c0 2-1 3-3 3H5c-2 0-3-1-3-3z" fill="#16508f" /><rect x="8" y="11" width="4.500" height="4.500" fill="#f25022" /><rect x="13.500" y="11" width="4.500" height="4.500" fill="#7fba00" /><rect x="8" y="16.500" width="4.500" height="4.500" fill="#00a4ef" /><rect x="13.500" y="16.500" width="4.500" height="4.500" fill="#ffb900" /></Svg>,
  <Svg w={30} h={30}><path d="M12 6l11-5 6 6v14l-6 7H12z" fill="#2ec4ee" /><path d="M12 4l11-3 6 6v7H12z" fill="#1490df" /><rect x="1" y="8" width="17" height="16" rx="1.500" fill="#0f5fae" /><ellipse cx="9.500" cy="16" rx="4.200" ry="5" stroke="#fff" strokeWidth="2" /></Svg>,
  <Svg w={28} h={30}><rect width="28" height="30" fill="#b51116" /><path d="M4 6c8 0 12 3 14 6l7-2-4 5 3 4-8-2-3 5-4-2c3-3 1-9-5-14z" fill="#2a0a0a" /></Svg>,
  <Svg w={28} h={30}><path d="M2 3h10l3 3h11v22H2z" fill="#f0b420" /><path d="M2 9h26v20H2z" fill="#fcd94f" /><rect x="9" y="20" width="12" height="7" rx="1" fill="#1578d3" /><path d="M9 22h12" stroke="#0e4f91" /></Svg>,
  <Chrome key="c1" />,
  <div className="relative" key="c2"><Chrome /><div className="absolute -right-[1px] -top-[2px] w-[14px] h-[16px] rounded-full bg-[#6b4a33]" /></div>,
  <Svg w={28} h={28}><circle cx="14" cy="14" r="10.500" stroke="#5cb531" strokeWidth="4.500" /><circle cx="14" cy="14" r="10.500" stroke="#fff" strokeWidth="1" strokeDasharray="2 7" /></Svg>,
];

const Taskbar = () => (
  <div className="h-[60px] shrink-0 bg-[#d5dfec] border-t-2 border-[#111] flex">
    <div className="w-[475px] shrink-0 flex items-start">
      <div className="relative ml-[25px] mt-[14px] w-[28px] h-[34px] shrink-0">
        <svg width="28" height="34" viewBox="0 0 28 34"><ellipse cx="14" cy="19" rx="11" ry="14" fill="#f7a823" /><path d="M1 13h19M1 19h26M4 25h11M18 25h6" stroke="#f6d66f" strokeWidth="2.500" /></svg>
        <div className="absolute left-[13px] -top-[5px] w-[20px] h-[20px] rounded-full bg-[#c42b1c] text-white text-[13px] leading-[20px] text-center">7</div>
      </div>
      <div className="ml-[10px] mt-[8px] text-[14.500px] leading-[20px] tracking-[-0.2px] text-[#1f1f1f]">28°C<div className="text-[#444]">Haze</div></div>
    </div>
    <div className="w-[46px] shrink-0 pt-[15px]">
      <svg width="30" height="30" viewBox="0 0 30 30"><defs><linearGradient id="wn" x1="0" y1="0" x2="1" y2="1"><stop offset="0" stopColor="#38d0f5" /><stop offset="1" stopColor="#0b6fd6" /></linearGradient></defs><path d="M0 1h14v14H0zM15 1h14v14H15zM0 16h14v14H0zM15 16h14v14H15z" fill="url(#wn)" /></svg>
    </div>
    <div className="w-[274px] h-[39px] mt-[9px] shrink-0 rounded-[20px] bg-[#f1f4f9] border border-[#c9d1dd] flex items-center pl-[13px] gap-[14px] relative">
      <svg width="18" height="18" viewBox="0 0 18 18" fill="none" stroke="#1f1f1f" strokeWidth="2"><circle cx="8" cy="8" r="6" /><path d="M12.500 12.500L17 17" /></svg>
      <span className="text-[17px] text-[#555] tracking-[-0.3px]">Quick search</span>
      <svg className="absolute right-[2px] top-[3px]" width="64" height="36" viewBox="0 0 64 36"><ellipse cx="12" cy="21" rx="9" ry="11" fill="#f58a68" /><ellipse cx="54" cy="19" rx="9" ry="11" fill="#f4ae22" /><ellipse cx="32" cy="12" rx="10" ry="13" fill="#28bdd3" /><path d="M32 25v10M14 32l2 4M52 30l-2 5" stroke="#5a4aa0" strokeWidth="1.300" /></svg>
    </div>
    <div className="w-[1px] shrink-0" />
    <div className="flex shrink-0">
      {TaskIcons.map((ic, i) => (
        <div key={i} className="w-[55.200px] flex flex-col items-center">
          <div className="h-[30px] mt-[14px] flex items-center justify-center">{ic}</div>
          <div className={`w-[5px] h-[5px] rounded-full mt-[4px] ${i === 7 || i === 9 || i === 10 ? "bg-[#7d838c]" : ""}`} />
        </div>
      ))}
      <div className="w-[46px] h-[48px] mt-[4px] rounded-[4px] bg-[#e6edf5] border border-[#dfe6ef] flex flex-col items-center ml-[4px] mr-[2px]">
        <svg className="mt-[8px]" width="24" height="30" viewBox="0 0 24 30"><rect x="1" y="16" width="9" height="14" fill="#f6e27a" /><rect x="7" y="8" width="9" height="22" fill="#f2c811" /><rect x="14" y="0" width="9" height="30" fill="#d9a300" /></svg>
        <div className="w-[18px] h-[3px] rounded-full bg-[#0f6cbd] mt-[1px]" />
      </div>
    </div>
    <div className="flex items-center flex-1 text-[#1f1f1f]">
      <div className="w-[30px] ml-[122px] flex justify-center shrink-0"><svg width="16" height="10" viewBox="0 0 16 10"><path d="M2 8l6-6 6 6" stroke="#1f1f1f" strokeWidth="1.500" fill="none" /></svg></div>
      <div className="relative w-[24px] h-[18px] ml-[11px] shrink-0">
        <svg width="22" height="16" viewBox="0 0 22 16"><path d="M5 14a4 4 0 0 1 0-8c1-3 4-5 7-4 3 0 4 2 5 4H12v8z" fill="#5a5a5a" /></svg>
        <div className="absolute right-[-2px] bottom-[-3px] w-[12px] h-[12px] rounded-full bg-[#e0202e] text-white text-[9px] leading-[11px] text-center font-bold">×</div>
      </div>
      <div className="w-[40px] ml-[19px] text-center text-[14.500px] leading-[20px] shrink-0">ENG<br />US</div>
      <div className="w-[26px] ml-[13px] flex justify-center shrink-0"><svg width="20" height="16" viewBox="0 0 20 16" fill="none"><path d="M1 5c5-5 13-5 18 0" stroke="#9aa1ab" strokeWidth="1.300" /><path d="M4 8c3-3 9-3 12 0M7 11c2-1.500 4-1.500 6 0" stroke="#1f1f1f" strokeWidth="1.400" /><circle cx="10" cy="14" r="1.500" fill="#1f1f1f" /></svg></div>
      <div className="w-[26px] ml-[4px] flex justify-center shrink-0"><svg width="21" height="16" viewBox="0 0 21 16" fill="none" stroke="#1f1f1f" strokeWidth="1.200"><path d="M1 5h3l5-4v14l-5-4H1z" /><path d="M12 5c1.500 2 1.500 4 0 6M15 3c2.500 3 2.500 7 0 10M18 1c3.500 4 3.500 10 0 14" /></svg></div>
      <div className="w-[26px] ml-[4px] flex justify-center shrink-0"><svg width="21" height="16" viewBox="0 0 21 16" fill="none"><rect x="1" y="4" width="16" height="9" rx="2" stroke="#1f1f1f" strokeWidth="1.300" /><rect x="3" y="6" width="12" height="5" fill="#1f1f1f" /><path d="M18 7v3" stroke="#1f1f1f" strokeWidth="2" /><path d="M6 0L3 6h3l-1 4 3-6H5z" fill="#1f1f1f" /></svg></div>
      <div className="flex-1 text-right pr-[25px] text-[14px] leading-[20px] tracking-[0.2px] -mt-[1px] whitespace-nowrap">07:32<br />18-08-2025</div>
    </div>
  </div>
);

export default function App() {
  return (
    <div className="w-[1920px] h-[1080px] overflow-hidden flex flex-col bg-white font-['Open_Sans','Noto_Sans',sans-serif]">
      <TitleBar />
      <Ribbon />
      <div className="flex h-[790px] shrink-0">
        <Rail />
        <div className="w-[1513px] shrink-0 flex flex-col">
          <div className="flex h-[746px]">
            <div className="w-[1472px] shrink-0 bg-white pl-[96px] pt-[13px] overflow-hidden"><Report /></div>
            <div className="w-[41px] shrink-0 bg-white border-l border-[#a6a6a6]"><Pane w={40} label="Filters" filter /></div>
          </div>
          <TabBar />
        </div>
        <Pane w={43} label="Selection" />
        <Pane w={44} label="Bookmarks" />
        <Pane w={43} label="Visualizations" />
        <DataPane />
      </div>
      <StatusBar />
      <Taskbar />
    </div>
  );
}
